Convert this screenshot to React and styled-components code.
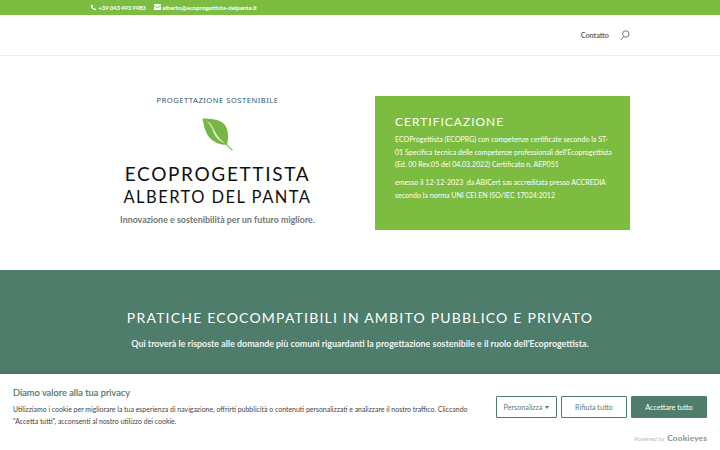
import React from 'react';
import styled, { createGlobalStyle } from 'styled-components';

const Global = createGlobalStyle`
  html, body { margin: 0; padding: 0; background: #fff; }
  body { font-family: Lato, "Liberation Sans", sans-serif; }
`;

const Page = styled.div`
  position: relative;
  width: 720px;
  height: 450px;
  overflow: hidden;
`;

const TopBar = styled.div`
  height: 15px;
  background: #7cbc40;
  padding: 0 0 1px 90px;
  display: flex;
  align-items: center;
  gap: 8px;
  color: #fff;
  font-size: 6.1px;
  font-weight: 700;
  box-sizing: border-box;
`;

const TopItem = styled.span`
  display: flex;
  align-items: center;
  gap: 1.5px;
  letter-spacing: ${(p) => (p.$tight ? '-0.2px' : '0')};
`;

const Header = styled.header`
  height: 41px;
  border-bottom: 1px solid #eeeeee;
  box-sizing: border-box;
  padding: 0 90px 0 0;
  display: flex;
  justify-content: flex-end;
  align-items: center;
  gap: 11px;
  color: #666;
  font-size: 7.2px;
  font-weight: 700;
`;

const Hero = styled.section`
  width: 540px;
  height: 214px;
  margin: 0 auto;
  display: grid;
  grid-template-columns: 255px 255px;
  column-gap: 30px;
  padding-top: 40px;
  box-sizing: border-box;
`;

const Intro = styled.div`
  display: flex;
  flex-direction: column;
  align-items: center;
  text-align: center;
`;

const Eyebrow = styled.div`
  font-family: "Noto Sans", sans-serif;
  font-size: 7.6px;
  letter-spacing: 0.5px;
  color: #35566a;
  line-height: 10px;
  margin-top: -1px;
`;

const LeafWrap = styled.div`
  margin-top: 13px;
  height: 33px;
`;

const Title = styled.h1`
  margin: 11px 0 0;
  font-family: Lato, sans-serif;
  font-weight: 400;
  font-size: 19px;
  letter-spacing: 1.65px;
  line-height: 24px;
  color: #111;
`;

const Subtitle = styled.h2`
  margin: 0;
  font-family: Lato, sans-serif;
  font-weight: 400;
  font-size: 16.5px;
  letter-spacing: 1.45px;
  line-height: 23px;
  color: #111;
`;

const Tagline = styled.p`
  margin: 5px 0 0;
  font-family: Lato, sans-serif;
  font-weight: 700;
  font-size: 8.9px;
  line-height: 12px;
  color: #757575;
`;

const Card = styled.aside`
  height: 134px;
  background: #7cbc40;
  color: #fff;
  padding: 17px 18px 0 20px;
  box-sizing: border-box;
`;

const CardTitle = styled.h3`
  margin: 0 0 4px;
  font-family: Lato, sans-serif;
  font-weight: 400;
  font-size: 12px;
  letter-spacing: 1px;
  line-height: 17px;
`;

const CardText = styled.p`
  margin: 0 0 5.4px;
  font-size: 7.05px;
  line-height: 12.6px;
  color: #fff;
`;

const Band = styled.section`
  height: 180px;
  background: #4e7d6b;
  text-align: center;
  color: #fff;
  padding-top: 39px;
  box-sizing: border-box;
`;

const BandTitle = styled.h2`
  margin: 0;
  font-family: Lato, sans-serif;
  font-weight: 400;
  font-size: 14px;
  letter-spacing: 1.2px;
  line-height: 18px;
`;

const BandText = styled.p`
  margin: 10px 0 0;
  font-family: Lato, sans-serif;
  font-weight: 700;
  font-size: 8.9px;
  line-height: 14px;
  color: #f1f5f3;
`;

const Cookie = styled.div`
  position: absolute;
  left: 0;
  right: 0;
  bottom: 0;
  height: 76px;
  background: #fff;
  box-shadow: 0 0 4px rgba(0, 0, 0, 0.15);
  display: flex;
  justify-content: space-between;
  padding: 12px 13px 0;
  box-sizing: border-box;
`;

const CookieCopy = styled.div`
  width: 470px;
`;

const CookieTitle = styled.div`
  font-size: 9.3px;
  font-weight: 400;
  -webkit-text-stroke: 0.2px #4e7d6b;
  color: #4e7d6b;
  line-height: 13px;
`;

const CookieText = styled.p`
  margin: 4px 0 0;
  font-size: 6.95px;
  line-height: 12.4px;
  color: #444;
`;

const CookieSide = styled.div`
  display: flex;
  flex-direction: column;
  align-items: flex-end;
`;

const Buttons = styled.div`
  display: flex;
  gap: 4px;
  margin-top: 10px;
`;

const Btn = styled.button`
  height: 22px;
  width: ${(p) => p.$w}px;
  box-sizing: border-box;
  border: 1.5px solid #4e7d6b;
  border-radius: 1px;
  background: ${(p) => (p.$solid ? '#4e7d6b' : '#fff')};
  color: ${(p) => (p.$solid ? '#fff' : '#5f7d72')};
  font-family: Lato, sans-serif;
  font-size: 7.2px;
  padding: 0;
  display: flex;
  align-items: center;
  justify-content: center;
  gap: 3px;
`;

const Caret = styled.span`
  width: 0;
  height: 0;
  border-left: 2.5px solid transparent;
  border-right: 2.5px solid transparent;
  border-top: 3.5px solid #4e7d6b;
`;

const Powered = styled.div`
  margin-top: 15px;
  display: flex;
  align-items: baseline;
  gap: 3px;
  font-size: 5.8px;
  color: #bbb;
`;

const Brand = styled.span`
  font-size: 8.2px;
  font-weight: 900;
  letter-spacing: 0.2px;
  color: #8f9996;
`;

const Phone = () => (
  <svg width="7" height="7" viewBox="0 0 24 24" fill="#fff">
    <path d="M6.6 2 3 4c-1 3 .5 7 4.5 11.5C12 20 16 22 19.5 21l2-3.5-5-3-2 2c-2-1-5-4.500-6-6.500l2-2z" />
  </svg>
);

const Mail = () => (
  <svg width="7" height="6" viewBox="0 0 24 20" fill="#fff">
    <path d="M0 2a2 2 0 0 1 2-2h20a2 2 0 0 1 2 2v1L12 11 0 3zM0 6l12 8 12-8v12a2 2 0 0 1-2 2H2a2 2 0 0 1-2-2z" />
  </svg>
);

const Search = () => (
  <svg width="10" height="11" viewBox="0 0 10 11" fill="none" stroke="#666" strokeWidth="0.9">
    <circle cx="5.8" cy="4" r="3.2" />
    <path d="M3.7 6.500.8 10" />
  </svg>
);

const Leaf = () => (
  <svg width="31" height="33" viewBox="0 0 31 33">
    <path d="M.5.5C8 .5 17 1 22 6c4 4 5 12 3 21-7 0-14-3-18-8C3 14 1.500 6 .5.500z" fill="#76b743" />
    <path d="M4.500 3c5 2 6 6 8.500 10.500s5 8 10 12c-6-2.500-10-6.500-11.500-11C10 10 8 6 4.500 3z" fill="#dcebcb" />
    <path d="M24.500 26.500 30.500 32.500" stroke="#8fc264" strokeWidth="1.2" />
  </svg>
);

export default function App() {
  return (
    <Page>
      <Global />
      <TopBar>
        <TopItem $tight><Phone />+39 043 493 9983</TopItem>
        <TopItem><Mail />alberto@ecoprogettista-delpanta.it</TopItem>
      </TopBar>
      <Header>
        <span>Contatto</span>
        <Search />
      </Header>
      <Hero>
        <Intro>
          <Eyebrow>PROGETTAZIONE SOSTENIBILE</Eyebrow>
          <LeafWrap><Leaf /></LeafWrap>
          <Title>ECOPROGETTISTA</Title>
          <Subtitle>ALBERTO DEL PANTA</Subtitle>
          <Tagline>Innovazione e sostenibilità per un futuro migliore.</Tagline>
        </Intro>
        <Card>
          <CardTitle>CERTIFICAZIONE</CardTitle>
          <CardText>
            ECOProgettista (ECOPRG) con competenze certificate secondo la ST-01 Specifica tecnica delle competenze professionali dell'Ecoprogettista (Ed. 00 Rev.05 del 04.03.2022) Certificato n. AEP051
          </CardText>
          <CardText>
            emesso il 12-12-2023 &nbsp;da ABICert sas accreditata presso ACCREDIA secondo la norma UNI CEI EN ISO/IEC 17024:2012
          </CardText>
        </Card>
      </Hero>
      <Band>
        <BandTitle>PRATICHE ECOCOMPATIBILI IN AMBITO PUBBLICO E PRIVATO</BandTitle>
        <BandText>Qui troverà le risposte alle domande più comuni riguardanti la progettazione sostenibile e il ruolo dell'Ecoprogettista.</BandText>
      </Band>
      <Cookie>
        <CookieCopy>
          <CookieTitle>Diamo valore alla tua privacy</CookieTitle>
          <CookieText>
            Utilizziamo i cookie per migliorare la tua esperienza di navigazione, offrirti pubblicità o contenuti personalizzati e analizzare il nostro traffico. Cliccando "Accetta tutti", acconsenti al nostro utilizzo dei cookie.
          </CookieText>
        </CookieCopy>
        <CookieSide>
          <Buttons>
            <Btn $w={61}>Personalizza <Caret /></Btn>
            <Btn $w={66}>Rifiuta tutto</Btn>
            <Btn $w={76} $solid>Accettare tutto</Btn>
          </Buttons>
          <Powered>Powered by <Brand>Cookieyes</Brand></Powered>
        </CookieSide>
      </Cookie>
    </Page>
  );
}
